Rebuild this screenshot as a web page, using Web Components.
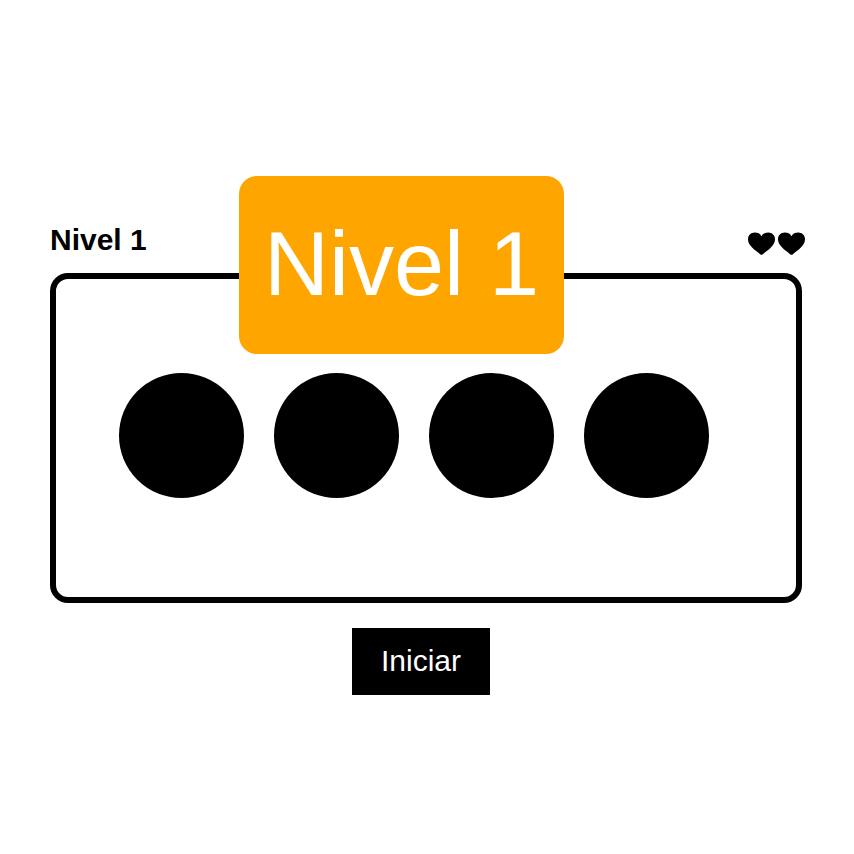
<!DOCTYPE html>
<html lang="es">
<head>
<meta charset="utf-8">
<meta name="viewport" content="width=device-width, initial-scale=1">
<title>Nivel 1</title>
<style>
  body { margin: 0; background: #fff; color: #000; font-family: "Liberation Sans", Arial, sans-serif; }
</style>
</head>
<body>
<memory-game>
  <game-header slot="header" lives="2">Nivel 1</game-header>
  <game-board slot="board">
    <game-light label="Luz 1"></game-light>
    <game-light label="Luz 2"></game-light>
    <game-light label="Luz 3"></game-light>
    <game-light label="Luz 4"></game-light>
    <level-badge slot="badge">Nivel 1</level-badge>
  </game-board>
  <start-button slot="action">Iniciar</start-button>
</memory-game>

<script>
  class BaseElement extends HTMLElement {
    connectedCallback() {
      if (this.shadowRoot) return;
      this.attachShadow({ mode: "open" }).innerHTML = this.render();
    }
  }

  customElements.define("memory-game", class extends BaseElement {
    render() {
      return `<style>
        :host { display: block; }
        main { display: flex; flex-direction: column; padding: 223px 52px 48px 50px; }
        .board { margin-top: 16px; }
        .action { display: flex; justify-content: center; margin-top: 25px; padding-right: 10px; }
      </style>
      <main>
        <slot name="header"></slot>
        <div class="board"><slot name="board"></slot></div>
        <div class="action"><slot name="action"></slot></div>
      </main>`;
    }
  });

  customElements.define("game-header", class extends BaseElement {
    render() {
      const heart = `<svg width="27" height="23" viewBox="0 0 27 23" aria-hidden="true">
        <path d="M13.5 22.8C12.6 22.8 11.6 21.6 10.4 20.7C7.4 18.6 4.6 16.6 2.4 13.6C.8 11.4 0 9.4 0 7.2C0 3.4 2.9 .6 6.8 .6C9.8 .6 12.2 1.7 13.5 4.2C14.8 1.7 17.2 .6 20.2 .6C24.1 .6 27 3.4 27 7.2C27 9.4 26.2 11.4 24.6 13.6C22.4 16.6 19.6 18.6 16.6 20.7C15.4 21.6 14.4 22.8 13.5 22.8Z"/>
      </svg>`;
      const lives = Number(this.getAttribute("lives")) || 0;
      return `<style>
        :host { display: block; }
        header { display: flex; justify-content: space-between; align-items: flex-end; }
        h1 { margin: 0; font-size: 30px; line-height: 34px; font-weight: 700; }
        .lives { display: flex; gap: 3px; margin-right: -3px; padding-bottom: 2px; }
        svg { display: block; fill: #000; }
      </style>
      <header>
        <h1><slot></slot></h1>
        <div class="lives" role="img" aria-label="${lives} vidas">${heart.repeat(lives)}</div>
      </header>`;
    }
  });

  customElements.define("game-board", class extends BaseElement {
    render() {
      return `<style>
        :host { display: block; position: relative; }
        section { display: flex; justify-content: center; gap: 30px; padding: 94px 24px 99px 0; border: 6px solid #000; border-radius: 18px; }
        .badge { position: absolute; top: -97px; left: 0; right: 49px; display: flex; justify-content: center; }
      </style>
      <section aria-label="Tablero"><slot></slot></section>
      <div class="badge"><slot name="badge"></slot></div>`;
    }
  });

  customElements.define("game-light", class extends BaseElement {
    render() {
      return `<style>
        :host { display: block; flex: 0 1 125px; }
        button { display: block; width: 100%; aspect-ratio: 1; padding: 0; border: 0; border-radius: 50%; background: #000; cursor: pointer; }
      </style>
      <button type="button" aria-label="${this.getAttribute("label")}"></button>`;
    }
  });

  customElements.define("level-badge", class extends BaseElement {
    render() {
      return `<style>
        :host { display: block; padding: 36px 25px 38px; border-radius: 18px; background: orange; color: #fff; font-size: 90px; line-height: 104px; white-space: nowrap; }
      </style>
      <slot></slot>`;
    }
  });

  customElements.define("start-button", class extends BaseElement {
    render() {
      return `<style>
        :host { display: block; }
        button { display: block; padding: 16px 29px 17px; border: 0; border-radius: 0; background: #000; color: #fff; font: inherit; font-size: 30px; line-height: 34px; cursor: pointer; }
      </style>
      <button type="button"><slot></slot></button>`;
    }
  });
</script>
</body>
</html>
